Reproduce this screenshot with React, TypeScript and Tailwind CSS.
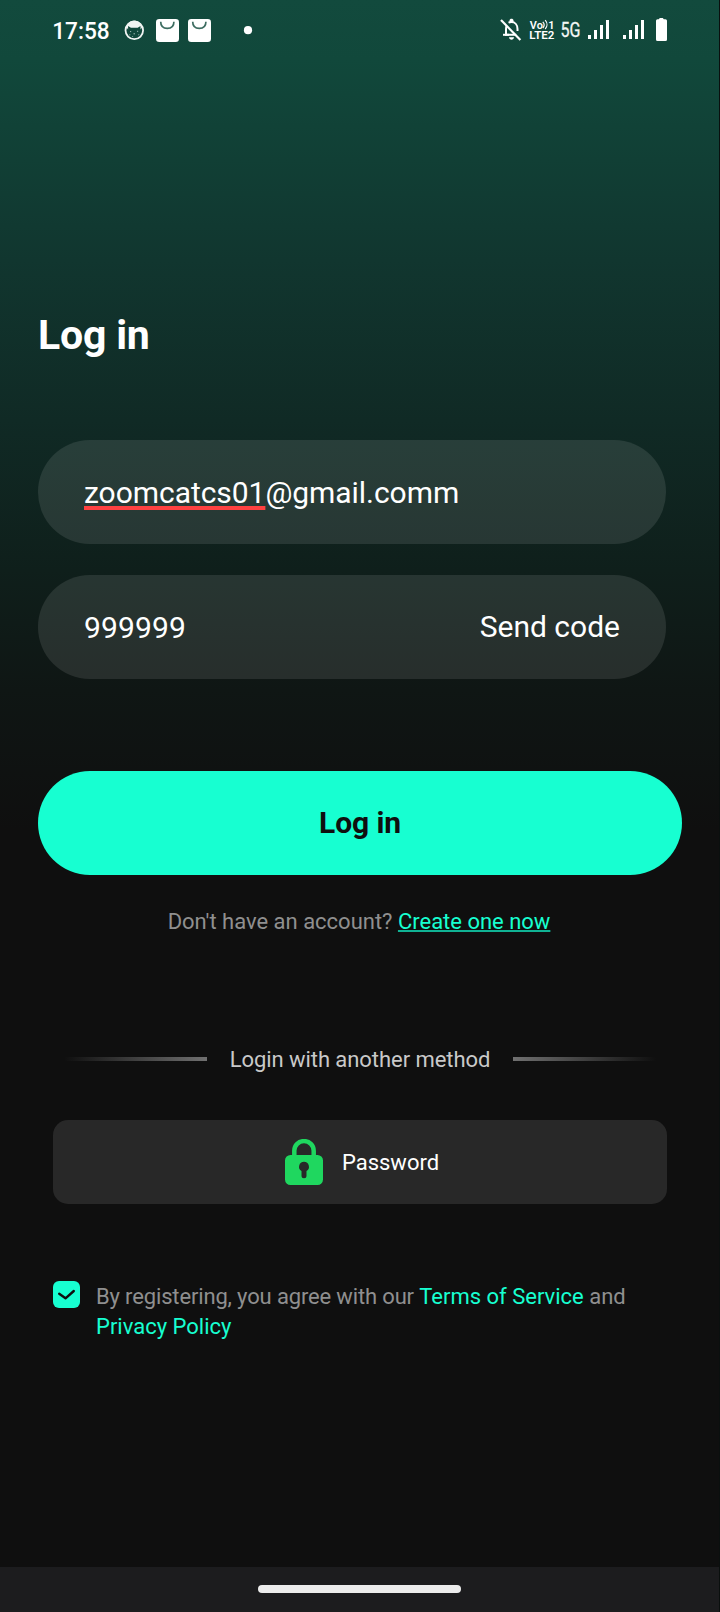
import React from "react";

function StatusIcons() {
  return (
    <svg width="720" height="60" viewBox="0 0 720 60" fill="none" className="block">
      <text x="52.2" y="38.8" fill="#fff" fontSize="23" fontWeight="500" textLength="57.500" lengthAdjust="spacingAndGlyphs">17:58</text>

      {/* cat face notification */}
      <circle cx="134.3" cy="30.3" r="8.8" stroke="#f1f5f3" strokeWidth="1.8" />
      <path d="M126.300 27c1-4 4-6.300 8-6.300s7 2.300 8 6.300l-1.800 2.500v-3.500l-2.800 1.700h-6.800l-2.800-1.700v3.500z" fill="#f1f5f3" />
      <path d="M130 31.600h1.200M137 31.300h1.200M133.500 33.800h1.500M129.300 34.800h1M138.300 34.800h1M132.300 36.500h.8" stroke="#9dbbb2" strokeWidth="1" />

      {/* shopping bags */}
      <rect x="156" y="19" width="23" height="23" rx="3.300" fill="#fff" />
      <path d="M160.700 21.700c0 4.200 2.500 6.600 6.600 6.600s6.600-2.400 6.600-6.600" stroke="#3c6c60" strokeWidth="1.700" />
      <rect x="188" y="19" width="23" height="23" rx="3.300" fill="#fff" />
      <path d="M192.700 21.700c0 4.200 2.500 6.600 6.600 6.600s6.600-2.400 6.600-6.600" stroke="#3c6c60" strokeWidth="1.700" />
      <circle cx="248" cy="30.200" r="4.100" fill="#fff" />

      {/* muted bell */}
      <path d="M506.800 25.500c-.6 1.200-.8 2.400-.8 4v5.300h10.200M517.500 31v-2c0-4-2.300-6.900-6.200-6.900-1.100 0-2 .2-2.800.6" stroke="#fff" strokeWidth="2" />
      <path d="M509.500 20.500c0-2.400 4-2.400 4 0v2h-4zM509 37.300h5c0 3.300-5 3.300-5 0z" fill="#fff" />
      <path d="M503 34.800h6" stroke="#fff" strokeWidth="2" />
      <path d="M501 20l19.400 20" stroke="#fff" strokeWidth="2.200" />

      {/* VoLTE */}
      <g fill="#fff" fontWeight="600">
        <text x="529.800" y="28.500" fontSize="11" textLength="13" lengthAdjust="spacingAndGlyphs">Vo</text>
        <text x="548.300" y="28.500" fontSize="11">1</text>
        <text x="529.300" y="39" fontSize="11.500" textLength="25" lengthAdjust="spacingAndGlyphs">LTE2</text>
      </g>
      <path d="M542.800 21.800c1.600 1.800 1.600 4.400 0 6.200M545.200 20.200c2.300 2.600 2.300 6.300 0 8.800" stroke="#fff" strokeWidth="1.200" />

      <text x="560.500" y="37" fill="#f3f7f5" stroke="#f3f7f5" strokeWidth="0.3" fontSize="21" textLength="20" lengthAdjust="spacingAndGlyphs">5G</text>

      <path d="M588 35h3v4h-3zM594 30h3v9h-3zM600 25h3v14h-3zM606 20h3v19h-3z" fill="#fff" />
      <path d="M623 35h3v4h-3zM629 30h3v9h-3zM635 25h3v14h-3zM641 20h3v19h-3z" fill="#fff" />
      <path d="M657.500 19.300h1.300l1-1.300h3l1 1.300h1.700a1.500 1.500 0 0 1 1.500 1.500v18.700a1.500 1.500 0 0 1-1.500 1.500h-8a1.500 1.500 0 0 1-1.500-1.500v-18.700a1.500 1.500 0 0 1 1.500-1.500z" fill="#fff" />
    </svg>
  );
}

function LockIcon() {
  return (
    <svg width="38" height="46" viewBox="0 0 38 46" fill="none">
      <path d="M9.300 18v-6.200a9.700 9.700 0 0 1 19.400 0V18" stroke="#1fd75f" strokeWidth="4.500" />
      <path
        fillRule="evenodd"
        fill="#1fd75f"
        d="M5.500 16h27a5.500 5.500 0 0 1 5.500 5.500v19a5.500 5.500 0 0 1-5.500 5.500h-27a5.500 5.500 0 0 1-5.500-5.500v-19a5.500 5.500 0 0 1 5.500-5.500zM19 22.800a5 5 0 0 0-2.500 9.300v4.600a2.500 2.500 0 0 0 5 0v-4.600a5 5 0 0 0-2.500-9.300z"
      />
    </svg>
  );
}

export default function App() {
  return (
    <div className="flex h-[1612px] w-[720px] flex-col overflow-hidden border-r border-[#0a0f0e] bg-[#0f0f0f] bg-[linear-gradient(180deg,#124a3d_0px,#11483b_60px,#11362f_260px,#102a25_420px,#0f1f1b_570px,#0f1614_690px,#0f0f0f_830px)] font-['Roboto','Noto_Sans',sans-serif] text-[22px] leading-[30px] text-white">
      <header className="h-[60px] w-[720px] shrink-0">
        <StatusIcons />
      </header>

      <main className="flex flex-1 flex-col pl-[38px] pr-[37px] pt-[251px]">
        <h1 className="h-12 text-[41px] font-bold leading-[48px] tracking-[-0.2px]">Log in</h1>

        <div className="mt-[81px] flex h-[104px] w-[628px] items-center rounded-full bg-white/10 px-[46px] pt-[2px] text-[30px]">
          <span className="whitespace-nowrap tracking-[-0.05px]">
            <span className="underline decoration-[#ff4141] decoration-[4px] underline-offset-[3px] [text-decoration-skip-ink:none]">zoomcatcs01</span>@gmail.comm
          </span>
        </div>

        <div className="mt-[31px] flex h-[104px] w-[628px] items-center justify-between rounded-full bg-white/10 px-[46px] text-[30px]">
          <span className="pt-[2px] tracking-[0.15px]">999999</span>
          <button className="whitespace-nowrap">Send code</button>
        </div>

        <button className="mt-[92px] h-[104px] w-[644px] shrink-0 rounded-full bg-[#17ffd1] text-[30px] font-bold tracking-[-0.1px] text-[#0f0f0f]">Log in</button>

        <p className="mt-8 whitespace-nowrap pr-[2px] text-center tracking-[-0.01px] text-[#8f8f8f]">
          Don't have an account?{" "}
          <a className="text-[#17ffd1] underline decoration-[#10b294] decoration-2 underline-offset-[1px] [text-decoration-skip-ink:none]">Create one now</a>
        </p>

        <div className="mt-[107px] flex h-[30px] items-center justify-between pl-[26px] pr-[26px]">
          <span className="h-1 w-[143px] bg-linear-to-r from-transparent to-[#707070]" />
          <span className="whitespace-nowrap pt-[2px] tracking-[-0.06px] text-[#c9c9c9]">Login with another method</span>
          <span className="h-1 w-[143px] bg-linear-to-l from-transparent to-[#707070]" />
        </div>

        <button className="ml-[15px] mt-[46px] flex h-[84px] w-[614px] shrink-0 items-center justify-center gap-[19px] rounded-[15px] bg-[#282828] pl-[4px]">
          <LockIcon />
          <span className="pt-[2px]">Password</span>
        </button>

        <div className="ml-[15px] mt-[77px] flex items-start gap-4">
          <span className="flex size-[27px] shrink-0 items-center justify-center rounded-[6px] bg-[#17ffd1]">
            <svg width="27" height="27" viewBox="0 0 27 27" fill="none">
              <path d="M6.200 12.800l6.300 4.500 8.300-7.300" stroke="#0f0f0f" strokeWidth="2.400" strokeLinecap="round" strokeLinejoin="round" />
            </svg>
          </span>
          <p className="whitespace-nowrap pt-px text-[#8f8f8f]">
            <span className="tracking-[-0.15px]">By registering, you agree with our </span>
            <a className="text-[#17ffd1]">Terms of Service</a> and
            <br />
            <a className="text-[#17ffd1]">Privacy Policy</a>
          </p>
        </div>
      </main>

      <footer className="flex h-[45px] w-[720px] shrink-0 items-center bg-[#1c1c1e] pl-[258px]">
        <span className="-mt-px h-[8px] w-[203px] rounded-full bg-[#ececec]" />
      </footer>
    </div>
  );
}
